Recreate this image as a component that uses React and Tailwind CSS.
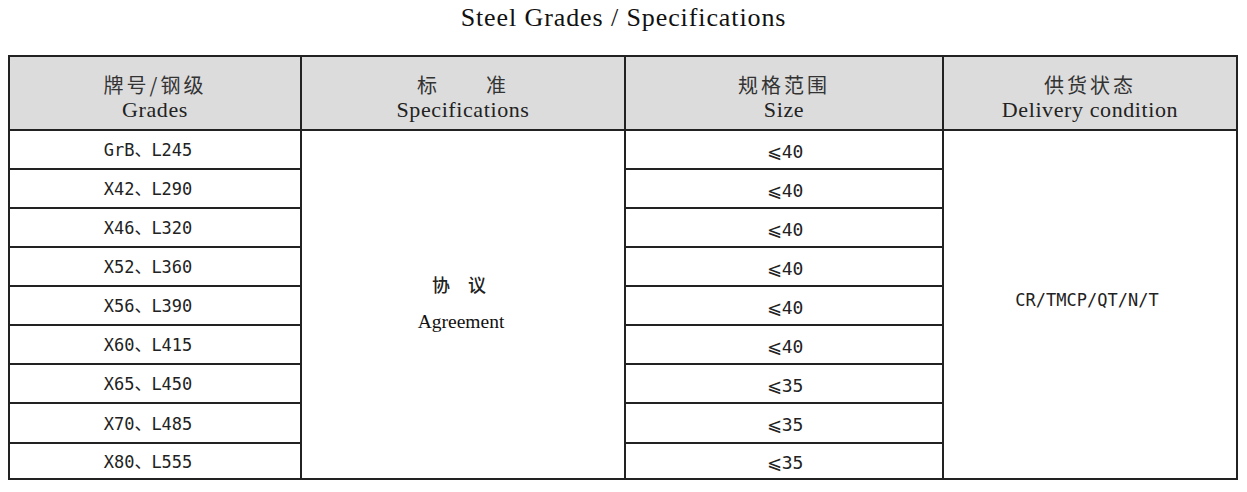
import React from "react";

const grades = [
  ["GrB、L245", "⩽40"],
  ["X42、L290", "⩽40"],
  ["X46、L320", "⩽40"],
  ["X52、L360", "⩽40"],
  ["X56、L390", "⩽40"],
  ["X60、L415", "⩽40"],
  ["X65、L450", "⩽35"],
  ["X70、L485", "⩽35"],
  ["X80、L555", "⩽35"],
];

const serif = "font-['Liberation_Serif','Noto_Sans_CJK_SC',serif]";
const cjk = "font-['Noto_Sans_CJK_SC',sans-serif]";
const mono = "font-['DejaVu_Sans_Mono','Noto_Sans_CJK_SC',monospace]";

function Head({ zh, en }) {
  return (
    <div className="bg-[#dcdcdc] flex flex-col items-center justify-center pt-[9px]">
      <div className={`${cjk} text-[20px] leading-[24px] tracking-[3px] text-[#333] whitespace-pre`}>{zh}</div>
      <div className={`${serif} text-[22px] leading-[26px] tracking-[0.6px] text-[#222]`}>{en}</div>
    </div>
  );
}

export default function App() {
  return (
    <div className="w-[1247px] h-[492px] bg-white">
      <div className="h-[55px] flex justify-center pt-[2px]">
        <div className={`${serif} text-[26px] leading-[32px] tracking-[0.9px] text-[#111]`}>
          Steel Grades / Specifications
        </div>
      </div>
      <div className="ml-[8px] w-[1230px] grid grid-cols-[290px_322px_316px_292px] grid-rows-[72px_37px_37px_37px_37px_37px_37px_37px_38px_34px] gap-[2px] p-[2px] bg-[#222]">
        <Head zh="牌号/钢级" en="Grades" />
        <Head zh="标　　准" en="Specifications" />
        <Head zh="规格范围" en="Size" />
        <Head zh="供货状态" en="Delivery condition" />
        {grades.map(([g, s], i) => (
          <React.Fragment key={g}>
            <div
              className={`bg-white flex items-center justify-center ${mono} text-[17px] text-[#222] pr-[14px] pt-[3px]`}
              style={{ gridColumn: 1, gridRow: i + 2 }}
            >
              {g}
            </div>
            <div
              className={`bg-white flex items-center justify-center ${mono} text-[18px] text-[#222] pl-[2px] pt-[3px]`}
              style={{ gridColumn: 3, gridRow: i + 2 }}
            >
              {s}
            </div>
          </React.Fragment>
        ))}
        <div className="bg-white col-start-2 row-start-2 row-span-9 flex flex-col items-center justify-center pb-[4px]">
          <div className={`${cjk} text-[18px] leading-[24px] font-medium text-[#222] pr-[8px]`}>协　议</div>
          <div className={`${serif} text-[19.5px] leading-[24px] mt-[14px] text-[#111] pr-[4px]`}>Agreement</div>
        </div>
        <div className={`bg-white col-start-4 row-start-2 row-span-9 flex items-center justify-center ${mono} text-[17px] text-[#222] pr-[6px] pb-[8px]`}>
          CR/TMCP/QT/N/T
        </div>
      </div>
    </div>
  );
}
